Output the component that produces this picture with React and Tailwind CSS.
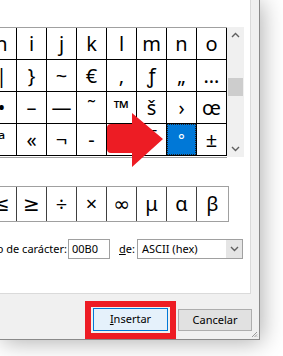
import React from "react";

const uiFont = { fontFamily: '"Noto Sans", "Open Sans", sans-serif' };
const glyphFont = { fontFamily: '"Noto Sans", "DejaVu Sans", sans-serif' };

// ---------- Data ----------
const gridRows = [
  ["h", "i", "j", "k", "l", "m", "n", "o"],
  ["|", "}", "~", "€", "‚", "ƒ", "„", "…"],
  ["•", "–", "—", "˜", "™", "š", "›", "œ"],
  ["ª", "«", "¬", "-", "®", "¯", "°", "±"],
];
const recent = ["≤", "≥", "÷", "×", "∞", "μ", "α", "β"];

function Chevron({ dir = "down", className = "" }) {
  return (
    <svg width="9" height="6" viewBox="0 0 9 6" className={className}>
      <path
        d={dir === "up" ? "M1 5 L4.5 1.5 L8 5" : "M1 1 L4.5 4.5 L8 1"}
        fill="none"
        stroke="currentColor"
        strokeWidth="1.4"
      />
    </svg>
  );
}

function App() {
  return (
    <div className="relative w-[283px] h-[356px] overflow-hidden bg-white" style={uiFont}>
      {/* ---------- Dialog window ---------- */}
      <div className="relative flex flex-col w-[260px] h-[340px] bg-[#f0f0f0] border-r border-b border-[#8a8a8a] shadow-[2px_2px_22px_rgba(0,0,0,0.32)]">
        {/* Tab panel */}
        <div className="w-[251px] h-[294px] shrink-0 bg-white border-r border-b border-[#dadada] pt-[27px]">
          {/* Symbol list */}
          <div className="flex w-[244px]">
            <div className="w-[227px] overflow-hidden border-t border-b border-[#a0a0a0] pb-[1px]">
              <div className="-ml-[13px] w-[240px]">
                {gridRows.map((row, r) => (
                  <div key={r} className="flex">
                    {row.map((ch, c) => {
                      const selected = r === 3 && c === 6;
                      return (
                        <div
                          key={c}
                          className={`w-[30px] h-[32px] border-r border-b border-black flex items-center justify-center text-[20px] leading-none ${
                            selected ? "bg-[#0078d7] text-white" : "text-black"
                          }`}
                          style={glyphFont}
                        >
                          {selected ? (
                            <div className="w-full h-full border border-dotted border-[#222] flex items-center justify-center text-[16px]">
                              {ch}
                            </div>
                          ) : (
                            ch
                          )}
                        </div>
                      );
                    })}
                  </div>
                ))}
              </div>
            </div>
            {/* Scrollbar */}
            <div className="w-[17px] h-[130px] bg-[#f0f0f0] flex flex-col items-center text-[#606060]">
              <Chevron dir="up" className="mt-[5px]" />
              <div className="mt-[40px] w-[15px] h-[18px] bg-[#cdcdcd]" />
              <div className="flex-1" />
              <Chevron dir="down" className="mb-[5px]" />
            </div>
          </div>

          {/* Recently used symbols */}
          <div className="mt-[28px] w-[229px] h-[36px] overflow-hidden border-t border-b border-r border-[#a0a0a0]">
            <div className="-ml-[13px] flex h-full">
              {recent.map((ch, i) => (
                <div
                  key={i}
                  className={`${i === 7 ? "w-[31px]" : "w-[30px] border-r border-[#404040]"} h-full flex items-center justify-center text-[20px] leading-none text-black`}
                  style={glyphFont}
                >
                  {ch}
                </div>
              ))}
            </div>
          </div>

          {/* Character code row */}
          <div className="mt-[17px] flex items-center h-[20px] text-[11px] text-black">
            <div className="w-[68px] pr-[1px] overflow-hidden flex justify-end whitespace-nowrap">
              Código de carácter:
            </div>
            <div className="w-[42px] h-[20px] border border-[#a0a0a0] flex items-center pl-[3px]">
              00B0
            </div>
            <div className="ml-[9px] w-[18px]">
              <span className="underline">d</span>e:
            </div>
            <div className="w-[106px] h-[20px] border border-[#a0a0a0] flex items-center">
              <span className="flex-1 pl-[4px]">ASCII (hex)</span>
              <div className="w-[16px] h-full bg-[#e5e5e5] flex items-center justify-center text-[#606060]">
                <Chevron dir="down" />
              </div>
            </div>
          </div>
        </div>

        {/* ---------- Buttons ---------- */}
        <div className="flex-1 flex items-start justify-end gap-[2px] pt-[7px] pr-[7px] text-[11px] text-black">
          <div className="border-[6px] border-[#ed1c24] px-[2px] pt-[1px] pb-[2px]">
            <div className="w-[75px] h-[23px] border border-[#0078d7] bg-[#e5f1fb] flex items-center justify-center">
              <span>
                <span className="underline">I</span>nsertar
              </span>
            </div>
          </div>
          <div className="mt-[8px] w-[74px] h-[22px] border border-[#adadad] bg-[#e1e1e1] flex items-center justify-center">
            Cancelar
          </div>
        </div>

        {/* Resize grip */}
        <svg className="absolute right-[1px] bottom-[1px]" width="7" height="7" viewBox="0 0 7 7">
          <path d="M6 1 L1 6 M6 3.5 L3.5 6 M6 5.5 L5.5 6" stroke="#9a9a9a" strokeWidth="1" />
        </svg>
      </div>

      {/* ---------- Red arrow annotation ---------- */}
      <svg className="absolute left-[100px] top-[105px]" width="70" height="70" viewBox="0 0 70 70">
        <path
          d="M11 19 H32 V8 L63 34 L32 62 V48 H11 Q7 48 7 44 V23 Q7 19 11 19 Z"
          fill="#ed1c24"
        />
      </svg>
    </div>
  );
}

export default App;
